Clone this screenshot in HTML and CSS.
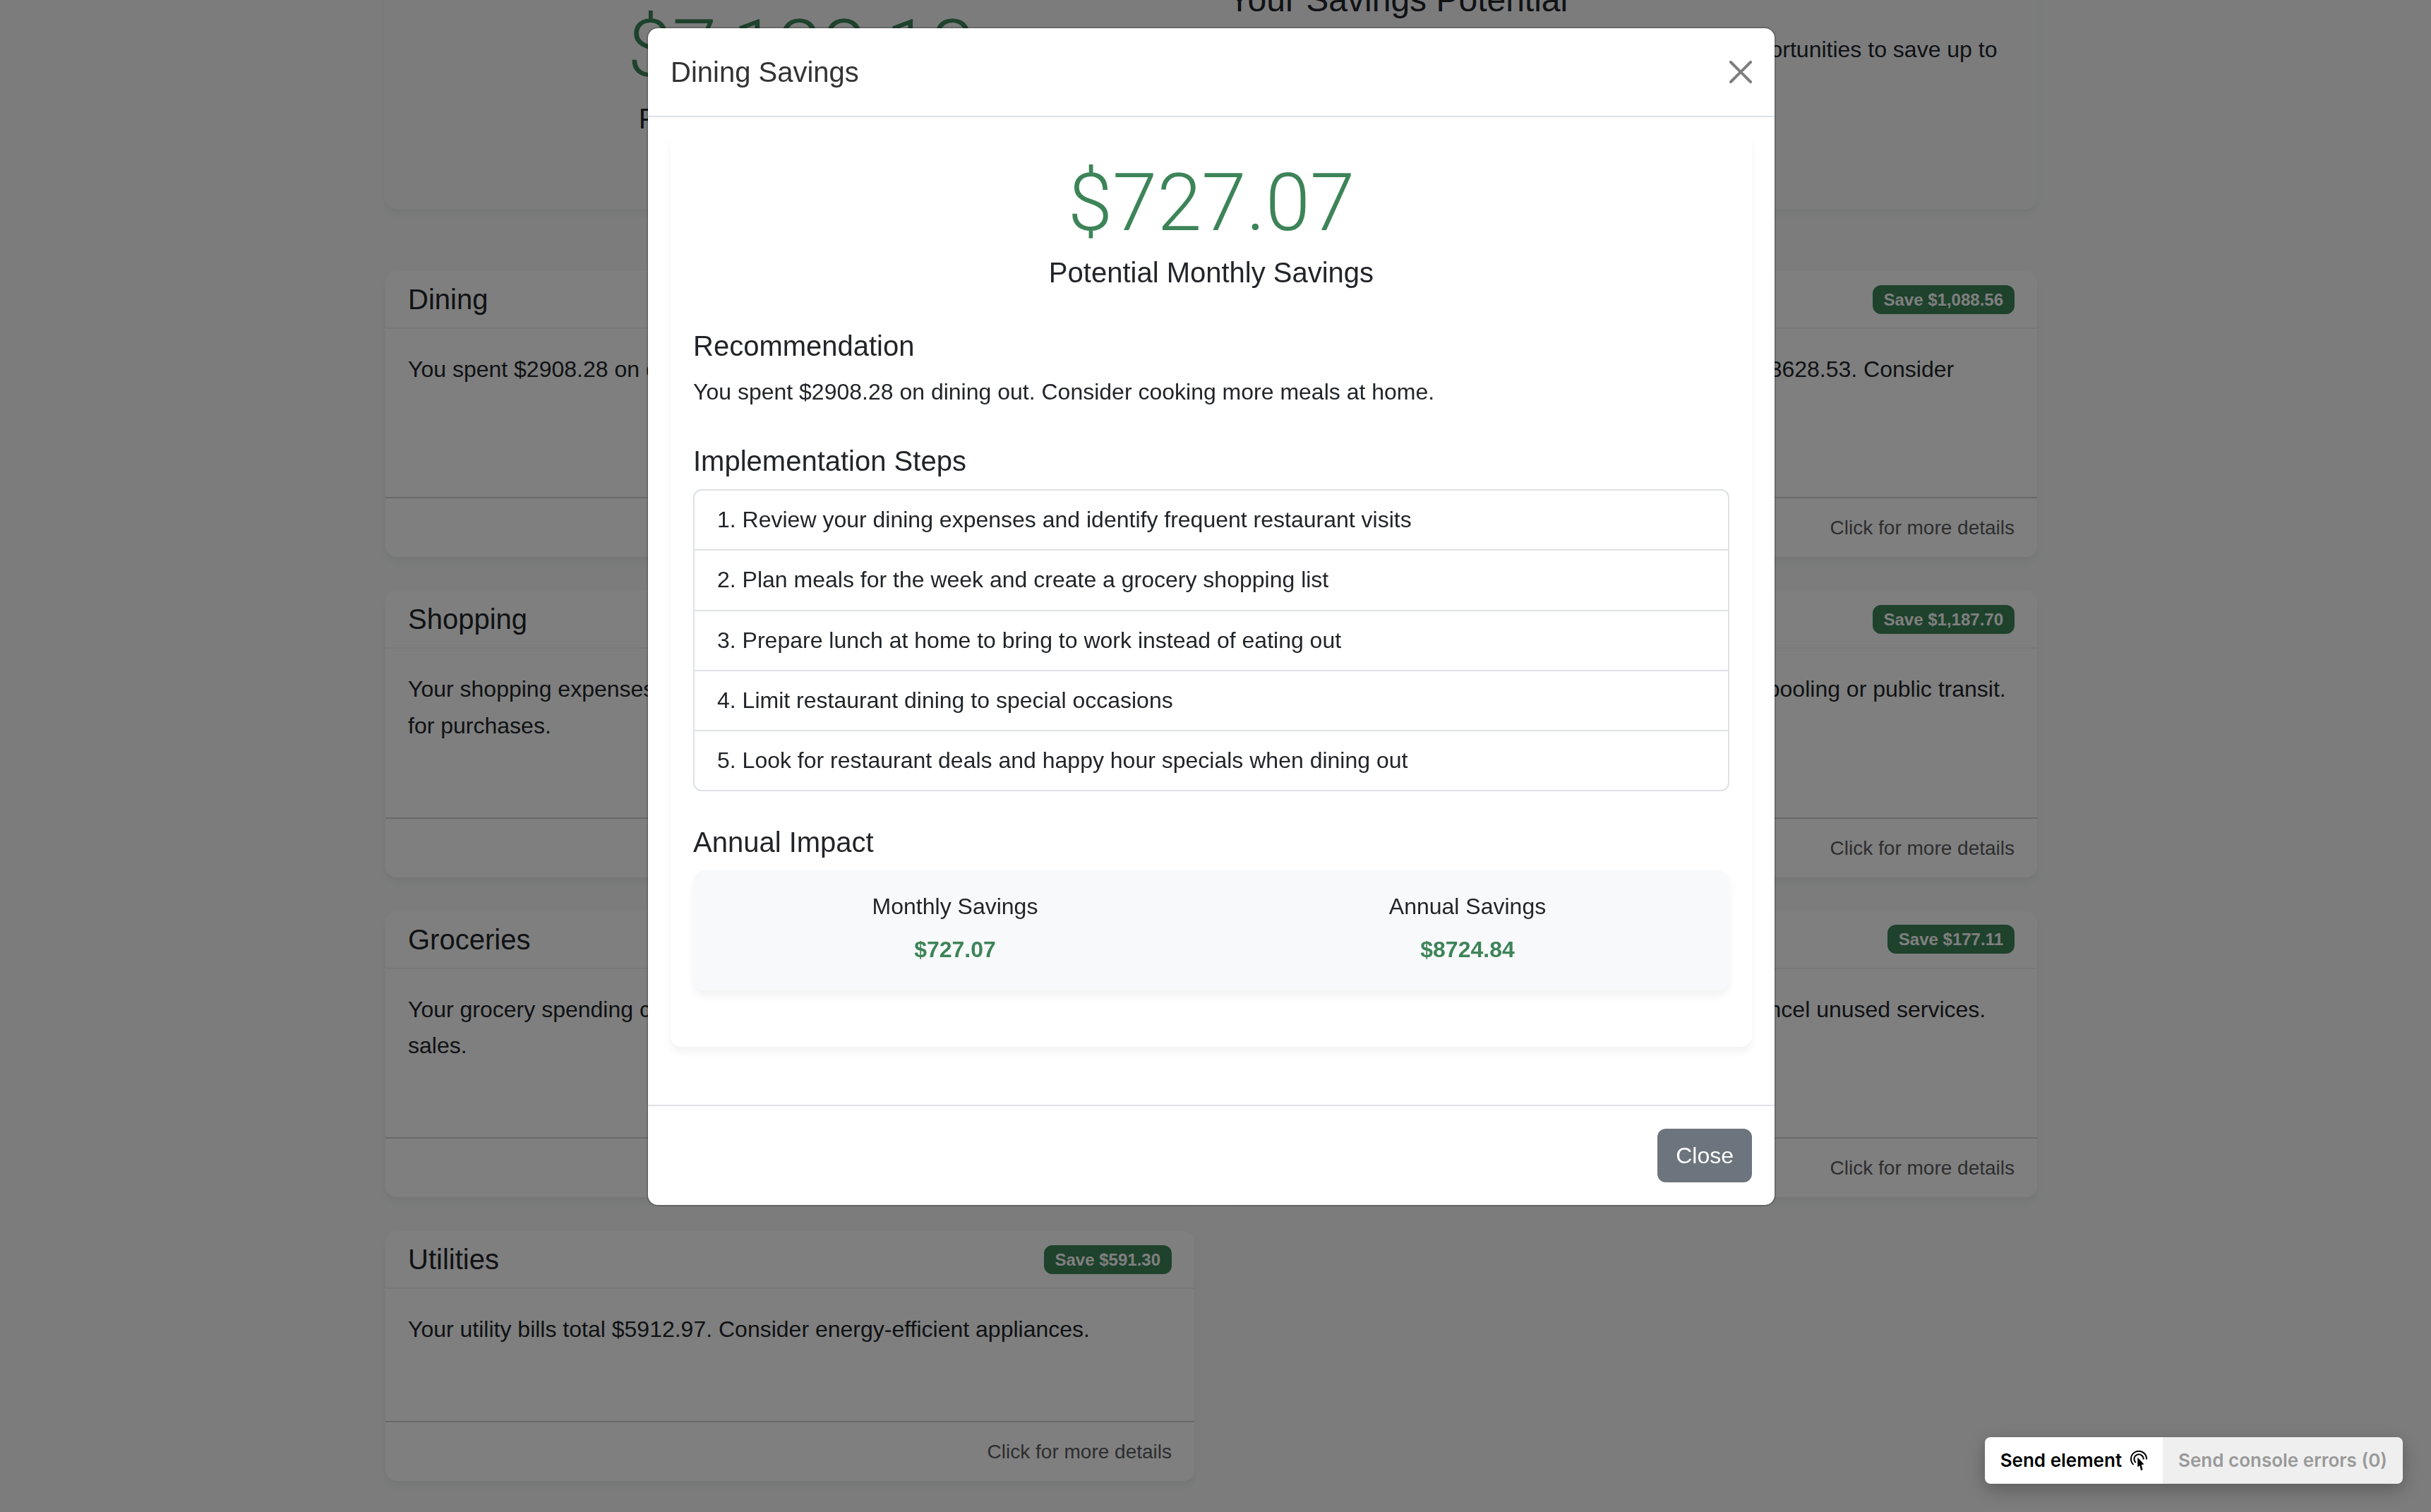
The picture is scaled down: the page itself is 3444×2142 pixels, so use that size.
FILE: index.html
```html
<!DOCTYPE html>
<html lang="en">
<head>
  <meta charset="utf-8">
  <meta name="viewport" content="width=device-width, initial-scale=1">
  <title>Savings Recommendations</title>
  <link rel="stylesheet" href="styles.css">
</head>
<body>
  <main class="page">
    <section class="summary card">
      <div class="summary-total">
        <p class="display">$7,188.18</p>
        <p class="lead">Potential Monthly Savings</p>
      </div>
      <div class="summary-text">
        <h2 class="summary-title">Your Savings Potential</h2>
        <p>Based on your spending patterns, we've identified opportunities to save up to $7,188.18 per month.</p>
        <p>Click on a card to see how to get started.</p>
      </div>
    </section>

    <section class="cards">
      <article class="card">
        <header class="card-header"><h3 class="heading">Dining</h3><span class="badge">Save $727.07</span></header>
        <p class="card-body">You spent $2908.28 on dining out. Consider cooking more meals at home.</p>
        <footer class="card-footer">Click for more details</footer>
      </article>
      <article class="card">
        <header class="card-header"><h3 class="heading">Entertainment</h3><span class="badge">Save $1,088.56</span></header>
        <p class="card-body">This month your total entertainment spending was $3628.53. Consider inexpensive activities.</p>
        <footer class="card-footer">Click for more details</footer>
      </article>
      <article class="card">
        <header class="card-header"><h3 class="heading">Shopping</h3><span class="badge">Save $1,443.26</span></header>
        <p class="card-body">Your shopping expenses total $4810.87. Consider setting a monthly budget for&nbsp;purchases.</p>
        <footer class="card-footer">Click for more details</footer>
      </article>
      <article class="card">
        <header class="card-header"><h3 class="heading">Transportation</h3><span class="badge">Save $1,187.70</span></header>
        <p class="card-body">You spent $5938.50 on transportation. Consider carpooling or public transit.</p>
        <footer class="card-footer">Click for more details</footer>
      </article>
      <article class="card">
        <header class="card-header"><h3 class="heading">Groceries</h3><span class="badge">Save $973.18</span></header>
        <p class="card-body">Your grocery spending could be reduced by planning meals and shopping at sales.</p>
        <footer class="card-footer">Click for more details</footer>
      </article>
      <article class="card">
        <header class="card-header"><h3 class="heading">Subscriptions</h3><span class="badge">Save $177.11</span></header>
        <p class="card-body">You spent $354.22 on subscriptions. Review and cancel unused services.</p>
        <footer class="card-footer">Click for more details</footer>
      </article>
      <article class="card">
        <header class="card-header"><h3 class="heading">Utilities</h3><span class="badge">Save $591.30</span></header>
        <p class="card-body">Your utility bills total $5912.97. Consider energy-efficient appliances.</p>
        <footer class="card-footer">Click for more details</footer>
      </article>
    </section>
  </main>

  <div class="backdrop">
    <div class="modal" role="dialog" aria-modal="true" aria-labelledby="modal-title">
      <header class="modal-header">
        <h2 class="modal-title" id="modal-title">Dining Savings</h2>
        <button class="modal-close" type="button" aria-label="Close">
          <svg viewBox="0 0 16 16" aria-hidden="true"><path d="M.293.293a1 1 0 0 1 1.414 0L8 6.586 14.293.293a1 1 0 1 1 1.414 1.414L9.414 8l6.293 6.293a1 1 0 0 1-1.414 1.414L8 9.414l-6.293 6.293a1 1 0 0 1-1.414-1.414L6.586 8 .293 1.707a1 1 0 0 1 0-1.414z"/></svg>
        </button>
      </header>
      <div class="modal-body">
        <div class="card detail">
          <div class="detail-total">
            <p class="display">$727.07</p>
            <p class="lead">Potential Monthly Savings</p>
          </div>
          <section class="detail-section">
            <h3 class="heading">Recommendation</h3>
            <p>You spent $2908.28 on dining out. Consider cooking more meals at home.</p>
          </section>
          <section class="detail-section">
            <h3 class="heading">Implementation Steps</h3>
            <ol class="steps">
              <li>Review your dining expenses and identify frequent restaurant visits</li>
              <li>Plan meals for the week and create a grocery shopping list</li>
              <li>Prepare lunch at home to bring to work instead of eating out</li>
              <li>Limit restaurant dining to special occasions</li>
              <li>Look for restaurant deals and happy hour specials when dining out</li>
            </ol>
          </section>
          <section class="detail-section">
            <h3 class="heading">Annual Impact</h3>
            <dl class="impact">
              <div><dt>Monthly Savings</dt><dd>$727.07</dd></div>
              <div><dt>Annual Savings</dt><dd>$8724.84</dd></div>
            </dl>
          </section>
        </div>
      </div>
      <footer class="modal-footer">
        <button class="btn" type="button">Close</button>
      </footer>
    </div>
  </div>

  <div class="toolbar">
    <button class="tool" type="button">Send element
      <svg class="tool-icon" viewBox="0 0 24 28" aria-hidden="true">
        <path d="M4.600 20A11 11 0 1 1 23 12.500" fill="none" stroke="currentColor" stroke-width="2"/>
        <path d="M7.800 17A6.600 6.600 0 1 1 18.600 12.500" fill="none" stroke="currentColor" stroke-width="2"/>
        <path d="M10.300 9.500V23.500L13.300 21L15 28L17.500 27.300L15.800 20L19.500 19.500Z" fill="currentColor"/>
      </svg>
    </button>
    <button class="tool" type="button" disabled>Send console errors (0)</button>
  </div>
</body>
</html>
```
FILE: styles.css
```css
* {
  box-sizing: border-box;
}

body {
  margin: 0;
  height: 100vh;
  overflow: hidden;
  background: #f8f9fa;
  color: #212529;
  font-family: "Liberation Sans", Arial, sans-serif;
  font-size: 32px;
  line-height: 1.6;
}

h2, h3, p, ol, dl, dd {
  margin: 0;
  padding: 0;
  font-weight: 400;
}

button {
  border: 0;
  font: inherit;
}

/* Page behind the dialog, scrolled so the summary is partly out of view */
.page {
  max-width: 2352px;
  margin: -94px auto 0;
  padding-right: 12px;
}

.card {
  border-radius: 16px;
  background: #fff;
  box-shadow: 0 8px 12px rgba(0, 0, 0, 0.05);
}

.summary {
  display: grid;
  grid-template-columns: 1fr 1fr;
  align-items: center;
  gap: 48px;
  min-height: 390px;
  margin-bottom: 88px;
  padding: 64px 32px;
  background: #f8f9fa;
}

.summary-total,
.detail-total {
  text-align: center;
}

.display {
  color: #3d8458;
  font-family: Roboto, "Liberation Sans", sans-serif;
  font-size: 114px;
  font-weight: 300;
  line-height: 134px;
}

.lead {
  font-size: 40px;
  font-weight: 300;
}

.summary-title {
  margin-bottom: 16px;
  font-size: 48px;
  line-height: 1.2;
}

.summary-title + p {
  margin-bottom: 32px;
}

.heading {
  font-size: 40px;
  line-height: 48px;
}

.cards {
  display: grid;
  grid-template-columns: 1fr 1fr;
  gap: 48px;
}

.cards .card {
  display: flex;
  flex-direction: column;
}

.card-header {
  display: flex;
  align-items: center;
  justify-content: space-between;
  padding: 16px 32px;
  border-bottom: 2px solid #f0f0f0;
}

.badge {
  padding: 8px 16px;
  border-radius: 12px;
  background: #3d8458;
  color: #fff;
  font-size: 24px;
  font-weight: 700;
  line-height: 25px;
}

.card-body {
  flex: 1;
  padding: 32px 32px 104px;
}

.card-footer {
  padding: 16px 32px;
  border-top: 2px solid #d3d3d3;
  color: #5b5d60;
  font-size: 28px;
  line-height: 51px;
  text-align: right;
}

/* Dialog */
.backdrop {
  position: fixed;
  inset: 0;
  padding: 38px 12px 0 0;
  background: rgba(0, 0, 0, 0.5);
}

.modal {
  max-width: 1600px;
  margin: 0 auto;
  border: 2px solid rgba(0, 0, 0, 0.175);
  border-radius: 16px;
  background: #fff;
  background-clip: padding-box;
}

.modal-header {
  display: flex;
  align-items: center;
  justify-content: space-between;
  padding: 32px;
  border-bottom: 2px solid #dee2e6;
}

.modal-title {
  color: #333;
  font-size: 40px;
  line-height: 60px;
}

.modal-close {
  padding: 0;
  background: none;
  line-height: 0;
  opacity: 0.5;
}

.modal-close svg {
  width: 32px;
  height: 32px;
}

.modal-body {
  padding: 22px 32px 82px;
}

.detail {
  padding: 32px 32px 80px;
}

.detail-section {
  margin-top: 48px;
}

.detail-section .heading {
  margin-bottom: 16px;
}

.steps {
  border: 2px solid #dee2e6;
  border-radius: 12px;
  list-style-position: inside;
}

.steps li {
  padding: 16px 32px;
}

.steps li + li {
  border-top: 2px solid #dee2e6;
}

.impact {
  display: grid;
  grid-template-columns: 1fr 1fr;
  padding: 32px 8px;
  border-radius: 16px;
  background: #f8f9fa;
  box-shadow: 0 8px 12px rgba(0, 0, 0, 0.05);
  text-align: center;
}

.impact dt {
  margin-bottom: 16px;
  line-height: 1.2;
}

.impact dd {
  color: #3d8458;
  font-weight: 700;
}

.modal-footer {
  display: flex;
  justify-content: flex-end;
  padding: 32px;
  border-top: 2px solid #dee2e6;
}

.btn {
  padding: 14px 26px;
  border-radius: 12px;
  background: #6c757d;
  color: #fff;
  line-height: 48px;
}

/* Floating tools */
.toolbar {
  position: fixed;
  right: 40px;
  bottom: 40px;
  display: flex;
  overflow: hidden;
  border-radius: 8px;
  box-shadow: 0 8px 24px rgba(0, 0, 0, 0.25);
}

.tool {
  display: flex;
  align-items: center;
  gap: 12px;
  height: 66px;
  padding: 0 22px;
  background: #fff;
  color: #000;
  font-family: Inter, sans-serif;
  font-size: 26px;
  font-weight: 600;
}

.tool:disabled {
  background: #efefef;
  color: #999;
}

.tool-icon {
  width: 24px;
  height: 28px;
}
```
